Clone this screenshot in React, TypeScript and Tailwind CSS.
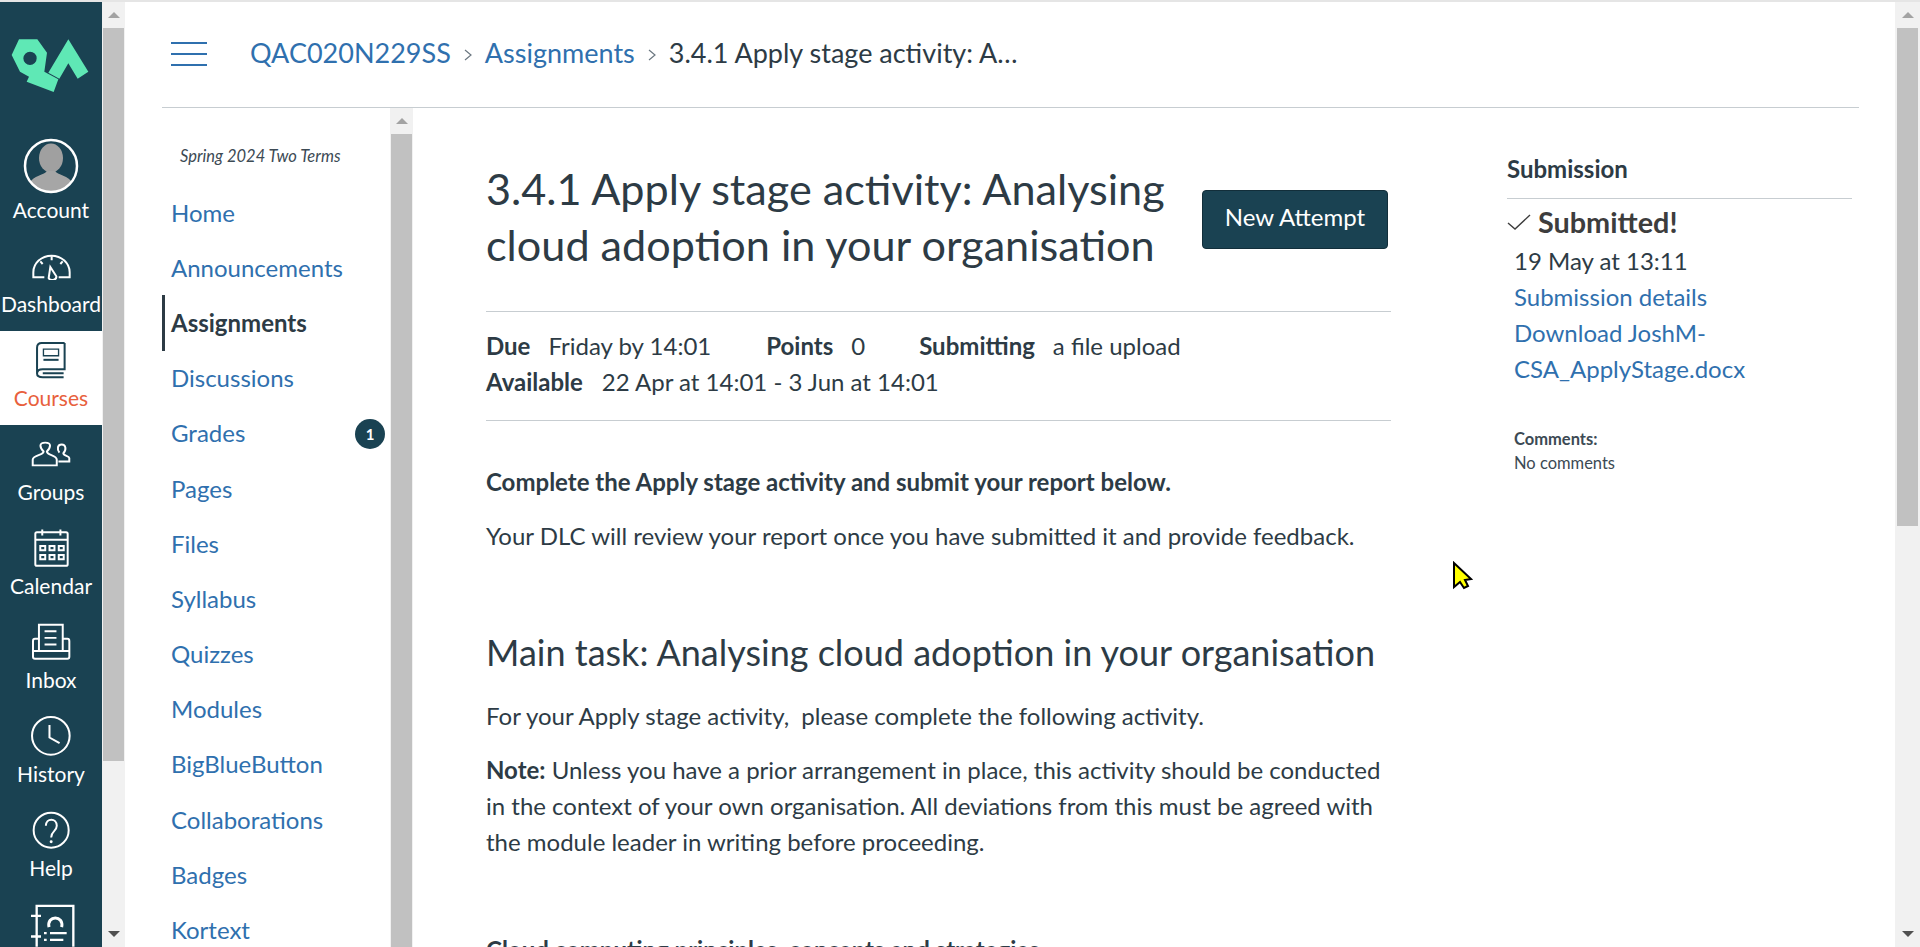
const navItems = [
  { label: "Account", icon: "account" },
  { label: "Dashboard", icon: "dashboard" },
  { label: "Courses", icon: "courses", active: true },
  { label: "Groups", icon: "groups" },
  { label: "Calendar", icon: "calendar" },
  { label: "Inbox", icon: "inbox" },
  { label: "History", icon: "history" },
  { label: "Help", icon: "help" },
]

const courseLinks = [
  "Home",
  "Announcements",
  "Assignments",
  "Discussions",
  "Grades",
  "Pages",
  "Files",
  "Syllabus",
  "Quizzes",
  "Modules",
  "BigBlueButton",
  "Collaborations",
  "Badges",
  "Kortext",
]

function Logo() {
  return (
    <svg width="90" height="70" viewBox="0 0 270 210" className="block">
      <path
        fill="#5fe8b5"
        fillRule="evenodd"
        d="M42 28 L97 28 L126 68 L118 125 L160 148 L146 186 L65 155 L72 140 L45 125 L20 75 Z M75 65 A20 20 0 1 0 75.1 105 A20 20 0 1 0 75 65 Z"
      />
      <path fill="#5fe8b5" d="M190 28 L250 125 L218 146 L190 100 L163 146 L130 128 Z" />
    </svg>
  )
}

function NavIcon({ name, color }: { name: string; color: string }) {
  const common = { fill: "none", stroke: color, strokeWidth: 6 }
  if (name === "account") {
    return (
      <svg width="56" height="56" viewBox="0 0 56 56">
        <clipPath id="avatar">
          <circle cx="28" cy="28" r="26" />
        </clipPath>
        <g clipPath="url(#avatar)">
          <ellipse cx="28" cy="20" rx="12" ry="14.5" fill="#a0a0a0" />
          <path d="M6 46 C10 37 22 37 24 33 H32 C34 37 46 37 50 46 V56 H6 Z" fill="#a6a6a6" />
        </g>
        <circle cx="28" cy="28" r="26" fill="none" stroke="#fff" strokeWidth="2.5" />
      </svg>
    )
  }
  if (name === "dashboard") {
    return (
      <svg width="41" height="27" viewBox="60 10 123 81" {...common}>
        <path d="M100 83 H67 V68 A54.5 50 0 0 1 176 68 V83 H143" />
        <path d="M122 20 V32 M88 35 L95 43 M155 35 L148 43" />
        <path d="M118 52 L136 80 A12 10 0 0 1 113 85 Z" />
      </svg>
    )
  }
  if (name === "courses") {
    return (
      <svg width="32" height="38" viewBox="75 278 95 113" {...common}>
        <path d="M163 284 V362 H98 Q81 362 81 375 Q81 386 98 386 H160 M81 375 V298 Q81 284 95 284 H163 M98 374 H160" />
        <path d="M100 302 H145 V322 H100 Z" strokeWidth="4" />
        <path d="M100 334 H145" />
      </svg>
    )
  }
  if (name === "groups") {
    return (
      <svg width="42" height="28" viewBox="60 50 125 85" {...common}>
        <path d="M67 127 V110 C67 95 100 97 100 85 C88 72 85 58 105 58 C125 58 122 72 110 85 C110 97 140 95 140 110 V127 Z" />
        <path d="M145 115 H178 V105 C178 98 160 98 160 90 C170 80 168 64 155 64 C142 64 140 78 148 88" />
      </svg>
    )
  }
  if (name === "calendar") {
    return (
      <svg width="35" height="40" viewBox="68 313 106 120" {...common}>
        <rect x="72" y="325" width="98" height="102" rx="5" />
        <path d="M72 348 H170 M93 317 V335 M148 317 V335" />
        <path d="M87 367 H102 V380 H87 Z M115 367 H130 V380 H115 Z M143 367 H158 V380 H143 Z M87 394 H102 V407 H87 Z M115 394 H130 V407 H115 Z M143 394 H158 V407 H143 Z" />
      </svg>
    )
  }
  if (name === "inbox") {
    return (
      <svg width="41" height="38" viewBox="62 40 122 115" {...common}>
        <path d="M85 125 V45 H157 V125 M102 65 H138 M102 85 H138 M102 105 H138" />
        <path d="M85 88 H73 Q67 88 67 95 V142 Q67 148 73 148 H171 Q177 148 177 142 V95 Q177 88 171 88 H157 M67 125 Q80 125 85 125 H157 Q170 125 177 125" />
      </svg>
    )
  }
  if (name === "history") {
    return (
      <svg width="42" height="42" viewBox="60 318 125 125" {...common}>
        <circle cx="122" cy="380" r="56" />
        <path d="M118 348 V385 L148 402" />
      </svg>
    )
  }
  return (
    <svg width="38" height="38" viewBox="60 600 115 115" {...common}>
      <circle cx="118" cy="658" r="53" />
      <path d="M102 645 C102 620 135 620 135 645 C135 662 118 660 118 680" />
      <circle cx="118" cy="693" r="4.5" fill={color} stroke="none" />
    </svg>
  )
}

function ScrollBar({ thumb, arrowDown }: { thumb: string; arrowDown?: boolean }) {
  return (
    <div className="flex h-full flex-col items-center bg-[#f1f1f1]">
      <div className="flex h-[26px] w-full shrink-0 items-center justify-center">
        <div className="h-0 w-0 border-x-[6px] border-b-[6px] border-x-transparent border-b-[#a3a3a3]" />
      </div>
      <div className={`w-[21px] shrink-0 bg-[#c1c1c1] ${thumb}`} />
      {arrowDown && (
        <div className="mt-auto flex h-[26px] w-full shrink-0 items-center justify-center">
          <div className="h-0 w-0 border-x-[6px] border-t-[6px] border-x-transparent border-t-[#505050]" />
        </div>
      )}
    </div>
  )
}

function Chevron() {
  return (
    <svg width="10" height="14" viewBox="0 0 10 14" fill="none" stroke="#6b7780" strokeWidth="1.2" className="mx-[12px] mt-[3px] shrink-0">
      <path d="M2 2 L8 7 L2 12" />
    </svg>
  )
}

export default function App() {
  return (
    <div className="relative flex h-[947px] w-[1920px] overflow-hidden border-t-2 border-[#e5e5e5] bg-white font-['Lato','Open_Sans',sans-serif] text-[#2d3b45]">
      {/* global nav */}
      <div className="flex h-full w-[102px] shrink-0 flex-col overflow-hidden bg-[#1a4252]">
        <div className="h-[141px] shrink-0 pt-[28px] pl-[5px]">
          <Logo />
        </div>
        {navItems.map((item) => (
          <div
            key={item.label}
            className={`flex h-[94px] shrink-0 flex-col items-center justify-end pb-[13px] text-[21px] leading-[28px] ${
              item.active ? "bg-white text-[#e8603c]" : "text-white"
            }`}
          >
            <div className={`flex h-[48px] items-center justify-center ${item.icon === "account" ? "mb-[6px]" : ""}`}>
              <NavIcon name={item.icon} color={item.active ? "#1a4252" : "#fff"} />
            </div>
            <span className="whitespace-nowrap">{item.label}</span>
          </div>
        ))}
        <div className="flex shrink-0 justify-center pt-[8px] pl-[2px]">
          <svg width="45" height="44" viewBox="55 880 135 131" fill="none" stroke="#fff" strokeWidth="7">
            <path d="M75 1011 V888 H185 V1011 M58 918 H88 M58 980 H88" />
            <path d="M112 952 C104 915 158 915 150 952" strokeWidth="9" />
            <path d="M115 970 H165 M115 990 H155 M97 970 H105 M97 990 H105" />
          </svg>
        </div>
      </div>

      <div className="h-full w-[23px] shrink-0">
        <ScrollBar thumb="h-[733px]" arrowDown />
      </div>

      {/* page */}
      <div className="flex h-full min-w-0 flex-1 flex-col pr-[36px] pl-[37px]">
        <div className="flex h-[106px] shrink-0 items-center border-b border-[#c7cdd1] pb-[2px]">
          <div className="ml-[9px] flex h-[24px] w-[36px] flex-col justify-between">
            <div className="h-[2px] bg-[#2f70ae]" />
            <div className="h-[2px] bg-[#2f70ae]" />
            <div className="h-[2px] bg-[#2f70ae]" />
          </div>
          <div className="ml-[43px] flex items-center text-[27px] whitespace-nowrap">
            <span className="text-[#2f70ae]">QAC020N229SS</span>
            <Chevron />
            <span className="text-[#2f70ae]">Assignments</span>
            <Chevron />
            <span>3.4.1 Apply stage activity: A…</span>
          </div>
        </div>

        <div className="flex min-h-0 flex-1">
          {/* course menu */}
          <div className="w-[228px] shrink-0 overflow-hidden">
            <div className="pt-[38px] pl-[18px] text-[16.5px] leading-[20px] text-[#3c4a54] italic">Spring 2024 Two Terms</div>
            <div className="mt-[19px]">
              {courseLinks.map((link) => (
                <div
                  key={link}
                  className={`relative flex h-[55.2px] items-center text-[24px] ${
                    link === "Assignments" ? "border-l-[3px] border-[#2d3b45] pl-[6px] font-bold text-[#2d3b45]" : "pl-[9px] text-[#2f70ae]"
                  }`}
                >
                  {link}
                  {link === "Grades" && (
                    <span className="absolute right-[5px] flex h-[30px] w-[30px] translate-y-[1px] items-center justify-center rounded-full bg-[#1a4252] text-[15px] font-bold text-white">
                      1
                    </span>
                  )}
                </div>
              ))}
            </div>
          </div>
          <div className="h-full w-[23px] shrink-0">
            <ScrollBar thumb="flex-1" />
          </div>

          {/* assignment */}
          <div className="w-[1094px] shrink-0 overflow-hidden pl-[73px]">
            <div className="w-[905px]">
              <div className="flex items-start justify-between pt-[52px] pb-[39px]">
                <h1 className="w-[700px] text-[43.2px] leading-[56px] font-normal">
                  3.4.1 Apply stage activity: Analysing cloud adoption in your organisation
                </h1>
                <div className="mt-[30px] mr-[3px] flex h-[59px] w-[186px] items-center justify-center rounded-[4px] border border-[#122e3a] bg-[#1a4252] pb-[5px] text-[24px] text-white">
                  New Attempt
                </div>
              </div>
              <div className="border-y border-[#c7cdd1] pt-[16px] pb-[20px] text-[24px] leading-[36px]">
                <div className="flex">
                  <b>Due</b>
                  <span className="ml-[18px]">Friday by 14:01</span>
                  <b className="ml-[55px]">Points</b>
                  <span className="ml-[18px]">0</span>
                  <b className="ml-[54px]">Submitting</b>
                  <span className="ml-[18px]">a file upload</span>
                </div>
                <div className="flex">
                  <b>Available</b>
                  <span className="ml-[19px]">22 Apr at 14:01 - 3 Jun at 14:01</span>
                </div>
              </div>
              <div className="pt-[43px] text-[24px] leading-[36px]">
                <p className="font-bold">Complete the Apply stage activity and submit your report below.</p>
                <p className="mt-[18px]">Your DLC will review your report once you have submitted it and provide feedback.</p>
                <h2 className="mt-[74px] text-[36px] leading-[48px] font-normal">Main task: Analysing cloud adoption in your organisation</h2>
                <p className="mt-[22px]">For your Apply stage activity,&nbsp; please complete the following activity.</p>
                <p className="mt-[18px]">
                  <b>Note:</b> Unless you have a prior arrangement in place, this activity should be conducted in the context of your own organisation. All deviations from this must be agreed with the module leader in writing before proceeding.
                </p>
                <p className="mt-[72px] font-bold">Cloud computing principles, concepts and strategies</p>
              </div>
            </div>
          </div>

          {/* submission details */}
          <div className="w-[345px] shrink-0 pt-[45px]">
            <div className="border-b border-[#c7cdd1] pb-[13px] text-[24px] leading-[32px] font-bold">Submission</div>
            <div className="mt-[5px] flex items-center text-[28.8px] leading-[36px] font-bold text-[#3d3d3d]">
              <svg width="24" height="18" viewBox="0 0 24 18" fill="none" stroke="#3d3d3d" strokeWidth="1.4" className="mr-[7px] shrink-0">
                <path d="M1 10 L8 16 L23 2" />
              </svg>
              Submitted!
            </div>
            <div className="mt-[3px] pl-[7px] text-[24px] leading-[36px]">
              <div>19 May at 13:11</div>
              <div className="text-[#2f70ae]">Submission details</div>
              <div className="text-[#2f70ae]">
                Download JoshM-
                <br />
                CSA_ApplyStage.docx
              </div>
            </div>
            <div className="mt-[40px] pl-[7px] text-[16.5px] leading-[24px] text-[#3c4a54]">
              <div className="font-bold">Comments:</div>
              <div>No comments</div>
            </div>
          </div>
        </div>
      </div>

      <div className="h-full w-[25px] shrink-0">
        <ScrollBar thumb="h-[498px]" arrowDown />
      </div>

      {/* mouse pointer */}
      <svg width="21" height="30" viewBox="0 0 21 30" className="absolute top-[559px] left-[1452px]">
        <path d="M2 2 V26 L8 21 L12 27 L16 25 L13 19 L19 18 Z" fill="#ffff00" stroke="#000" strokeWidth="2" />
      </svg>
    </div>
  )
}
